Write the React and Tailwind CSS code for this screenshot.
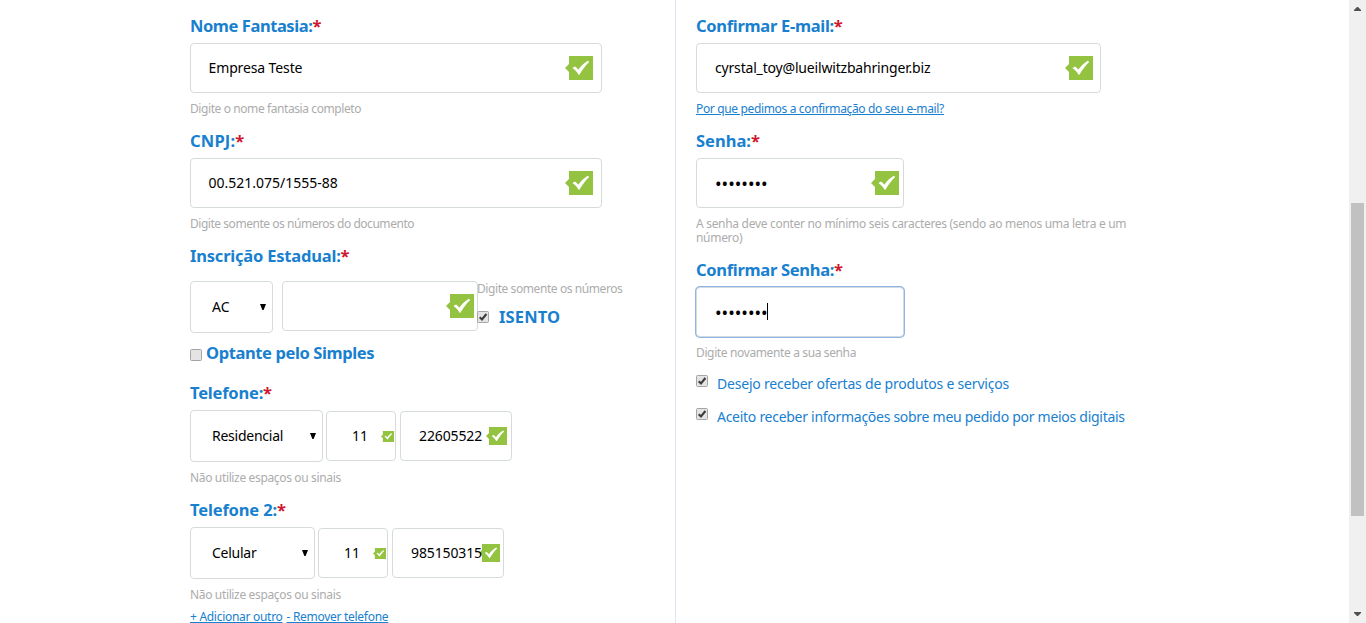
import React from "react";

function ValidIcon({ className }) {
  return (
    <svg viewBox="0 0 28 24" className={className} preserveAspectRatio="none">
      <path d="M4 0H28V24H4V16L0 12L4 8Z" fill="#94c341" />
      <path d="M7.4 12L10 10.6C11.4 11.4 12.4 12.4 13.2 13.8C15.8 10.2 18.8 7 22.8 4.7L24.2 5.9C20.4 9.4 17.2 13.8 14.4 18.8H13.6C12 15.8 10.2 13.8 7.4 12Z" fill="#fff" />
    </svg>
  );
}

function Label({ children, className = "" }) {
  return (
    <div className={`flex h-[33px] items-center whitespace-nowrap pb-[2px] text-[16.5px] font-bold leading-[31px] text-[#1880cf] ${className}`}>
      <span>{children}</span>
      <span className="tracking-normal text-[#d0152c]">*</span>
    </div>
  );
}

function Box({ children, className = "" }) {
  return (
    <div className={`flex shrink-0 items-center whitespace-nowrap rounded-[4px] border border-[#d5dbdb] bg-white text-[14px] text-black ${className}`}>
      {children}
    </div>
  );
}

function Select({ children, className = "", textClass = "" }) {
  return (
    <Box className={`h-[52px] justify-between pl-[21px] pr-[6px] ${className}`}>
      <span className={`pb-[2px] ${textClass}`}>{children}</span>
      <svg viewBox="0 0 6 6" className="h-[6px] w-[6px]">
        <path d="M0 0H6L3.6 6H2.4Z" fill="#000" />
      </svg>
    </Box>
  );
}

function Help({ children, className = "" }) {
  return <p className={`whitespace-nowrap text-[12px] text-[#acacac] ${className}`}>{children}</p>;
}

function Check({ on, className = "" }) {
  return (
    <svg viewBox="0 0 12 12" className={`h-3 w-3 shrink-0 ${className}`}>
      <rect x="0.5" y="0.5" width="11" height="11" rx="1" fill="#e4e4e4" stroke="#a5a5a5" />
      {on && <path d="M2.7 6.2L5 8.5L9.4 3" fill="none" stroke="#3c3c3c" strokeWidth="2.1" />}
    </svg>
  );
}

function Phone({ type, number, selectClass, typeClass, numberClass, iconClass }) {
  return (
    <div className="flex h-[52px] items-center">
      <Select className={selectClass} textClass={typeClass}>{type}</Select>
      <Box className="ml-[3px] h-[50px] w-[70px] justify-between pl-[25px] pr-px">
        <span className="pb-[2px]">11</span>
        <ValidIcon className="h-[11px] w-[13px]" />
      </Box>
      <Box className="ml-1 h-[50px] w-[112px] pl-[18px] pr-[2px]">
        <span className={`relative z-10 pb-[2px] tracking-[-0.13px] ${numberClass}`}>{number}</span>
        <ValidIcon className={`h-[18px] w-[21px] shrink-0 ${iconClass}`} />
      </Box>
    </div>
  );
}

export default function App() {
  return (
    <div className="flex h-[623px] w-full overflow-hidden bg-white font-['Noto_Sans','Open_Sans',sans-serif]">
      <main className="flex flex-1">
        <section className="w-[676px] border-r border-[#dfe7ee] pl-[190px] pt-[10px]">
          <Label className="tracking-[-0.43px]">Nome Fantasia:</Label>
          <Box className="h-[50px] w-[412px] justify-between pl-[17.5px] pr-2">
            <span className="pb-[2px] tracking-[-0.12px]">Empresa Teste</span>
            <ValidIcon className="h-6 w-7" />
          </Box>
          <Help className="h-8 leading-[31px] tracking-[-0.41px]">Digite o nome fantasia completo</Help>

          <Label className="tracking-[0.2px]">CNPJ:</Label>
          <Box className="h-[50px] w-[412px] justify-between pl-[17.5px] pr-2">
            <span className="pb-[2px]">00.521.075/1555-88</span>
            <ValidIcon className="h-6 w-7" />
          </Box>
          <Help className="h-8 leading-[31px] tracking-[-0.46px]">Digite somente os números do documento</Help>

          <Label className="tracking-[-0.2px]">Inscrição Estadual:</Label>
          <div className="flex h-[60px] pt-2">
            <Select className="w-[83px]">AC</Select>
            <Box className="ml-[9px] h-[50px] w-[196px] justify-end pr-[3px]">
              <ValidIcon className="h-6 w-7" />
            </Box>
            <div className="-ml-px">
              <Help className="h-[22px] leading-[15px] tracking-[-0.42px]">Digite somente os números</Help>
              <div className="flex h-7 items-center">
                <Check on />
                <span className="ml-[10px] text-[16.5px] font-bold leading-7 tracking-[0.15px] text-[#1880cf]">ISENTO</span>
              </div>
            </div>
          </div>
          <div className="flex h-11 items-center">
            <Check />
            <span className="ml-1 whitespace-nowrap pb-[3px] text-[16.5px] font-bold tracking-[-0.39px] text-[#1880cf]">Optante pelo Simples</span>
          </div>

          <Label className="tracking-[-0.2px]">Telefone:</Label>
          <Phone type="Residencial" number="22605522" selectClass="w-[133px]" typeClass="tracking-[-0.25px]" numberClass="w-[67px]" iconClass="" />
          <Help className="h-8 leading-[31px] tracking-[-0.35px]">Não utilize espaços ou sinais</Help>

          <Label className="tracking-[-0.15px]">Telefone 2:</Label>
          <Phone type="Celular" number="985150315" selectClass="w-[125px]" typeClass="tracking-[-0.25px]" numberClass="w-[71px]" iconClass="-ml-[3px]" />
          <Help className="h-[31px] leading-[31px] tracking-[-0.35px]">Não utilize espaços ou sinais</Help>
          <div className="flex gap-1 whitespace-nowrap text-[12px] leading-[13px] tracking-[-0.29px] text-[#1880cf] underline">
            <span>+ Adicionar outro</span>
            <span>- Remover telefone</span>
          </div>
        </section>

        <section className="w-[460px] pl-5 pt-[10px]">
          <Label className="tracking-[-0.3px]">Confirmar E-mail:</Label>
          <Box className="h-[50px] w-[405px] justify-between pl-[18px] pr-[7px]">
            <span className="pb-[2px] tracking-[-0.18px]">cyrstal_toy@lueilwitzbahringer.biz</span>
            <ValidIcon className="h-6 w-7" />
          </Box>
          <p className="h-8 whitespace-nowrap text-[12px] leading-[31px] tracking-[-0.35px] text-[#1880cf] underline">Por que pedimos a confirmação do seu e-mail?</p>

          <Label>Senha:</Label>
          <Box className="h-[50px] w-[208px] justify-between pl-[18px] pr-1">
            <span className="text-[17.5px] leading-5">••••••••</span>
            <ValidIcon className="h-6 w-7" />
          </Box>
          <Help className="h-[46px] pt-[9px] leading-[14px] tracking-[-0.3px]">
            A senha deve conter no mínimo seis caracteres (sendo ao menos uma letra e um<br />número)
          </Help>

          <Label className="tracking-[-0.3px]">Confirmar Senha:</Label>
          <Box className="h-[50px] w-[208px] border-[#9abdf3] pl-[18px] ring-1 ring-[#8fb3ee]">
            <span className="text-[17.5px] leading-5">••••••••</span>
            <span className="-ml-px mb-px h-[17px] w-px bg-black" />
          </Box>
          <Help className="h-8 leading-[31px] tracking-[-0.37px]">Digite novamente a sua senha</Help>
          <div className="flex h-[33px] whitespace-nowrap text-[14px] leading-[30px] text-[#1880cf]">
            <Check on className="mt-[6px]" />
            <span className="ml-[9px] tracking-[-0.2px]">Desejo receber ofertas de produtos e serviços</span>
          </div>
          <div className="flex h-[33px] whitespace-nowrap text-[14px] leading-[30px] text-[#1880cf]">
            <Check on className="mt-[6px]" />
            <span className="ml-[9px] tracking-[-0.28px]">Aceito receber informações sobre meu pedido por meios digitais</span>
          </div>
        </section>
      </main>
      <aside className="flex w-[17px] flex-col items-center bg-[#f0f0f0]">
        <svg viewBox="0 0 7 4" className="mt-[7px] h-1 w-[7px]"><path d="M0 4V3L3 0H4L7 3V4Z" fill="#505050" /></svg>
        <div className="mt-48 h-[313px] w-[13px] bg-[#c1c1c1]" />
        <svg viewBox="0 0 7 4" className="mt-24 h-1 w-[7px]"><path d="M0 0V1L3 4H4L7 1V0Z" fill="#505050" /></svg>
      </aside>
    </div>
  );
}
